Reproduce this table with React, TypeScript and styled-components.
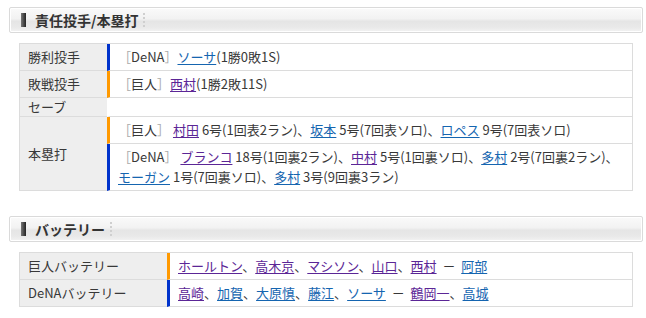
import React from "react";
import styled, { createGlobalStyle } from "styled-components";

const GlobalStyle = createGlobalStyle`
  html, body { margin: 0; padding: 0; background: #fff; }
  body {
    font-family: "Noto Sans CJK JP", "Noto Sans", sans-serif;
    color: #333;
  }
`;

const Page = styled.div`
  padding: 7px 0 0 9px;
  width: 634px;
`;

const Section = styled.section`
  & + & {
    margin-top: 25px;
  }
`;

const Heading = styled.h2`
  box-sizing: border-box;
  margin: 0;
  height: 26px;
  display: flex;
  align-items: center;
  padding-left: 11px;
  border: 1px solid #dadada;
  border-radius: 2px;
  box-shadow: inset 0 0 0 1px #fff;
  background: linear-gradient(
    to bottom,
    #fafafa 0%,
    #f2f2f2 45%,
    #e5e5e5 55%,
    #e9e9e9 80%,
    #f3f3f3 100%
  );
  font-size: 14px;
  font-weight: bold;
  color: #333;
  line-height: 1;
`;

const HeadMark = styled.span`
  width: 5px;
  height: 14px;
  margin-right: 9px;
  background: linear-gradient(to right, #777, #222);
`;

const HeadDots = styled.span`
  height: 14px;
  margin-left: 5px;
  border-left: 2px dotted #cfcfcf;
`;

const Table = styled.table`
  margin: 10px 0 0 10px;
  width: 614px;
  box-sizing: border-box;
  border-collapse: separate;
  border-spacing: 0;
  border: 1px solid #dcdcdc;
  border-bottom: none;
  table-layout: fixed;
  font-size: 13px;
`;

const Label = styled.th<{ $width?: number }>`
  ${(p) => (p.$width ? `width: ${p.$width}px;` : "")}
  background: #eeeeee;
  text-align: left;
  font-weight: normal;
  padding: 3px 8px;
  line-height: 12px;
  vertical-align: middle;
  border-bottom: 1px solid #dcdcdc;
  color: #383838;
  white-space: nowrap;
`;

const Cell = styled.td<{ $bar?: string }>`
  padding: 3px 8px;
  line-height: 20px;
  border-left: 3px solid ${(p) => p.$bar || "transparent"};
  border-bottom: 1px solid #dcdcdc;
  color: #383838;
  vertical-align: middle;
`;

const Bracket = styled.span`
  color: #aaa;
`;

const Name = styled.a<{ $visited?: boolean }>`
  color: ${(p) => (p.$visited ? "#5b2696" : "#1565b0")};
  text-decoration: underline;
  text-underline-offset: 2px;
  cursor: pointer;
`;

const ORANGE = "#ff9900";
const BLUE = "#0033cc";

type P = { n: string; v?: boolean };

const Team = ({ name }: { name: string }) => (
  <>
    <Bracket>［</Bracket>
    {name}
    <Bracket>］</Bracket>
  </>
);

type HR = { p: P; rest: string };

const HomeRuns = ({ team, items }: { team: string; items: HR[] }) => (
  <>
    <Team name={team} />{" "}
    {items.map((h, i) => (
      <React.Fragment key={i}>
        {i > 0 && "、"}
        <Name $visited={h.p.v}>{h.p.n}</Name> {h.rest}
      </React.Fragment>
    ))}
  </>
);

const Battery = ({ pitchers, catchers }: { pitchers: P[]; catchers: P[] }) => (
  <>
    {pitchers.map((p, i) => (
      <React.Fragment key={"p" + i}>
        {i > 0 && "、"}
        <Name $visited={p.v}>{p.n}</Name>
      </React.Fragment>
    ))}
    {"  －  "}
    {catchers.map((p, i) => (
      <React.Fragment key={"c" + i}>
        {i > 0 && "、"}
        <Name $visited={p.v}>{p.n}</Name>
      </React.Fragment>
    ))}
  </>
);

const DashGap = styled.span`
  white-space: pre;
`;

export default function App() {
  return (
    <>
      <GlobalStyle />
      <Page>
        <Section>
          <Heading>
            <HeadMark />
            責任投手/本塁打
            <HeadDots />
          </Heading>
          <Table>
            <tbody>
              <tr>
                <Label $width={71}>勝利投手</Label>
                <Cell $bar={BLUE}>
                  <Team name="DeNA" />
                  <Name>ソーサ</Name>(1勝0敗1S)
                </Cell>
              </tr>
              <tr>
                <Label>敗戦投手</Label>
                <Cell $bar={ORANGE}>
                  <Team name="巨人" />
                  <Name $visited>西村</Name>(1勝2敗11S)
                </Cell>
              </tr>
              <tr>
                <Label>セーブ</Label>
                <Cell />
              </tr>
              <tr>
                <Label rowSpan={2}>本塁打</Label>
                <Cell $bar={ORANGE}>
                  <HomeRuns
                    team="巨人"
                    items={[
                      { p: { n: "村田", v: true }, rest: "6号(1回表2ラン)" },
                      { p: { n: "坂本" }, rest: "5号(7回表ソロ)" },
                      { p: { n: "ロペス" }, rest: "9号(7回表ソロ)" },
                    ]}
                  />
                </Cell>
              </tr>
              <tr>
                <Cell $bar={BLUE}>
                  <HomeRuns
                    team="DeNA"
                    items={[
                      { p: { n: "ブランコ", v: true }, rest: "18号(1回裏2ラン)" },
                      { p: { n: "中村", v: true }, rest: "5号(1回裏ソロ)" },
                      { p: { n: "多村" }, rest: "2号(7回裏2ラン)" },
                      { p: { n: "モーガン" }, rest: "1号(7回裏ソロ)" },
                      { p: { n: "多村" }, rest: "3号(9回裏3ラン)" },
                    ]}
                  />
                </Cell>
              </tr>
            </tbody>
          </Table>
        </Section>
        <Section>
          <Heading>
            <HeadMark />
            バッテリー
            <HeadDots />
          </Heading>
          <Table>
            <tbody>
              <tr>
                <Label $width={131}>巨人バッテリー</Label>
                <Cell $bar={ORANGE}>
                  <DashGap>
                    <Battery
                      pitchers={[
                        { n: "ホールトン", v: true },
                        { n: "高木京", v: true },
                        { n: "マシソン", v: true },
                        { n: "山口", v: true },
                        { n: "西村", v: true },
                      ]}
                      catchers={[{ n: "阿部" }]}
                    />
                  </DashGap>
                </Cell>
              </tr>
              <tr>
                <Label>DeNAバッテリー</Label>
                <Cell $bar={BLUE}>
                  <DashGap>
                    <Battery
                      pitchers={[
                        { n: "高崎", v: true },
                        { n: "加賀" },
                        { n: "大原慎" },
                        { n: "藤江" },
                        { n: "ソーサ" },
                      ]}
                      catchers={[{ n: "鶴岡一", v: true }, { n: "高城" }]}
                    />
                  </DashGap>
                </Cell>
              </tr>
            </tbody>
          </Table>
        </Section>
      </Page>
    </>
  );
}
